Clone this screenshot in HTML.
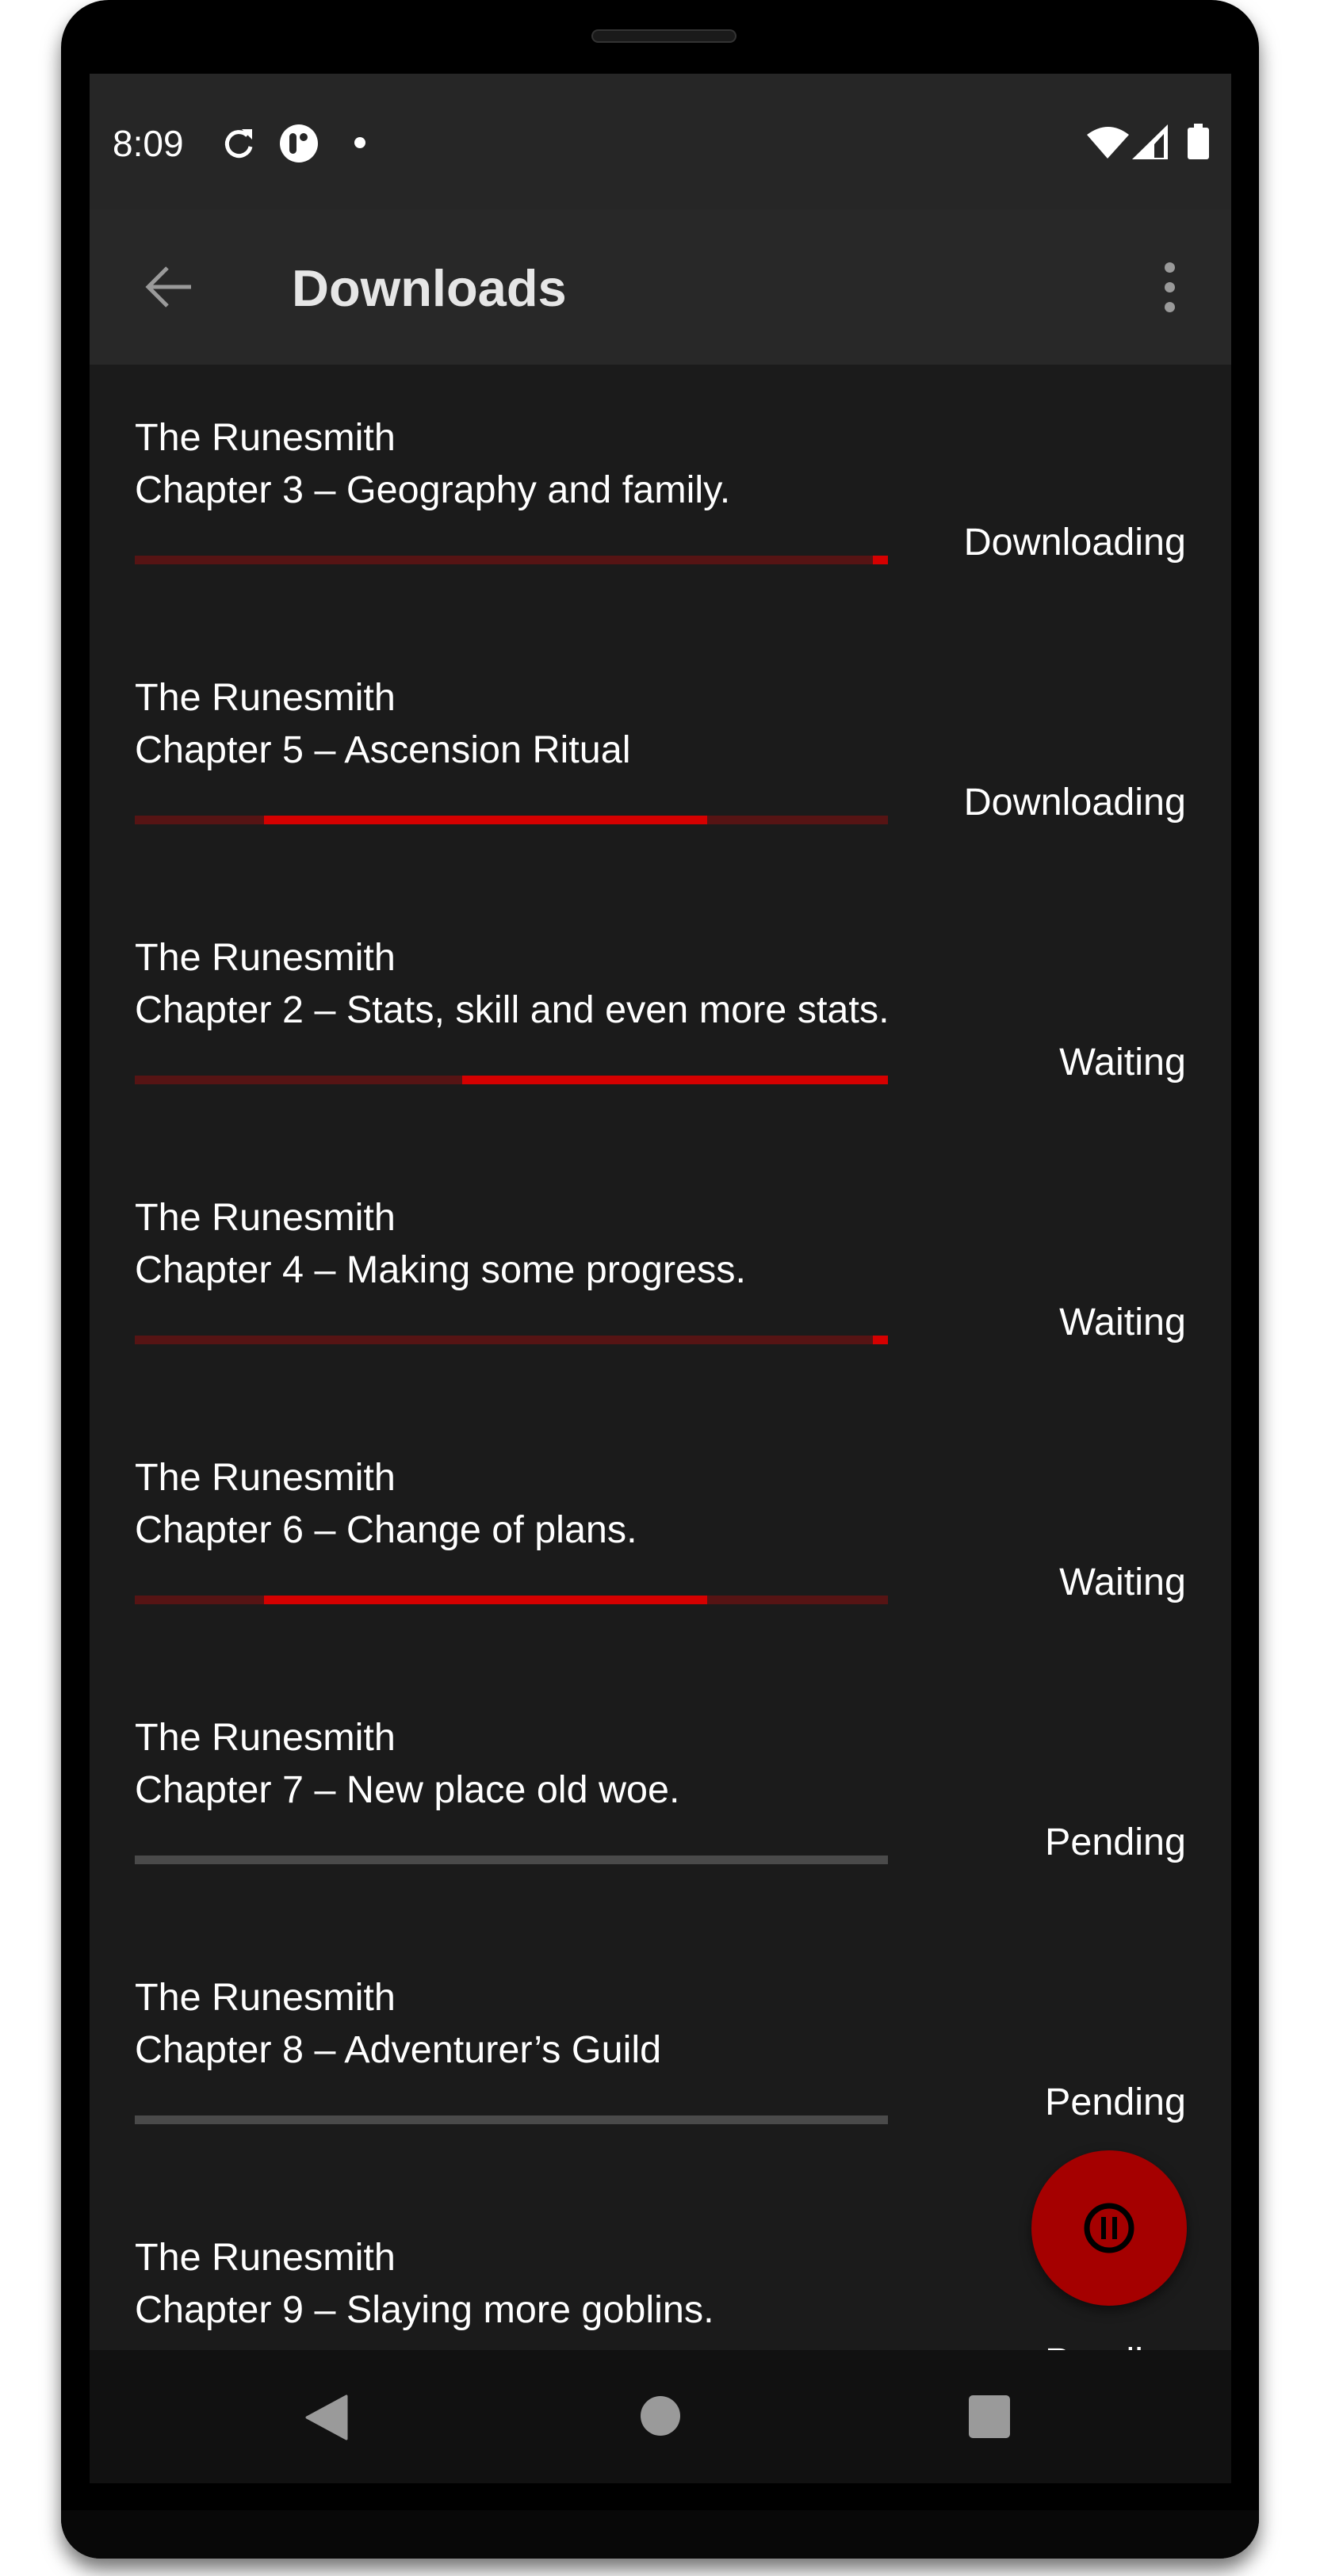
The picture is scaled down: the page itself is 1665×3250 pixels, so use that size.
<!DOCTYPE html>
<html><head><meta charset="utf-8"><style>
*{margin:0;padding:0;box-sizing:border-box}
body{width:1665px;height:3250px;background:#fff;position:relative;overflow:hidden;font-family:"Liberation Sans",sans-serif}
.phone{position:absolute;left:77px;top:0;width:1511px;height:3228px;background:#000;border-radius:60px 60px 50px 50px;box-shadow:0 14px 24px rgba(0,0,0,.55)}
.chin{position:absolute;left:77px;top:3167px;width:1511px;height:61px;background:#080808;border-radius:0 0 50px 50px}
.speaker{position:absolute;left:746px;top:37px;width:183px;height:17px;border-radius:9px;background:#1a1a1a;border:2px solid #333}
.screen{position:absolute;left:113px;top:93px;width:1440px;height:3040px;background:#1b1b1b;overflow:hidden}
.status{position:absolute;left:0;top:0;width:1440px;height:171px;background:#262626}
.appbar{position:absolute;left:0;top:171px;width:1440px;height:196px;background:#282828}
.t{position:absolute;color:#fff;font-size:48.5px;line-height:60px;white-space:nowrap}
.st{position:absolute;right:57px;color:#fff;font-size:48.5px;line-height:60px}
.bar{position:absolute;left:57px;width:950px;height:11px;background:#561414}
.bar i{position:absolute;top:0;height:11px;background:#d50000}
.grey{background:#4a4a4a}
.nav{position:absolute;left:0;top:2872px;width:1440px;height:168px;background:#111}
</style></head><body>
<div class="phone"></div>
<div class="chin"></div>
<div class="speaker"></div>
<div class="screen">
 <div class="status">
  <div style="position:absolute;left:29px;top:58px;color:#fff;font-size:46px;line-height:60px">8:09</div>
  <svg style="position:absolute;left:165px;top:64px" width="50" height="50" viewBox="0 0 50 50"><path d="M34 14 A15 15 0 1 0 38 28" fill="none" stroke="#fff" stroke-width="5"/><path d="M27 6 L40 6 L40 19 Z" fill="#fff"/></svg>
  <svg style="position:absolute;left:239px;top:63px" width="50" height="50" viewBox="0 0 50 50"><circle cx="25" cy="25" r="24" fill="#fff"/><rect x="13" y="12" width="9" height="26" rx="4.5" fill="#262626"/><circle cx="31" cy="17" r="5" fill="#262626"/></svg>
  <div style="position:absolute;left:334px;top:80px;width:14px;height:14px;border-radius:50%;background:#fff"></div>
  <svg style="position:absolute;left:1258px;top:63px" width="160" height="48" viewBox="0 0 160 48"><path d="M0 14 Q27 -6 53 14 L26 44 Z" fill="#fff"/><path d="M57 45 L102 1 L102 45 Z" fill="#fff"/><path d="M85 43 L85 26 L97 13 L97 43 Z" fill="#262626"/><rect x="127" y="5" width="27" height="40" rx="3" fill="#fff"/><rect x="135" y="0" width="11" height="6" fill="#fff"/></svg>
 </div>
 <div class="appbar">
  <svg style="position:absolute;left:68px;top:70px" width="64" height="56" viewBox="0 0 64 56"><path d="M60 28 H8 M30 4 L6 28 L30 52" fill="none" stroke="#9a9a9a" stroke-width="5"/></svg>
  <div style="position:absolute;left:255px;top:62px;color:#e6e6e6;font-size:65px;line-height:76px;font-weight:bold">Downloads</div>
  <div style="position:absolute;left:1356px;top:67px;width:13px;height:13px;border-radius:50%;background:#9a9a9a"></div>
  <div style="position:absolute;left:1356px;top:92px;width:13px;height:13px;border-radius:50%;background:#9a9a9a"></div>
  <div style="position:absolute;left:1356px;top:117px;width:13px;height:13px;border-radius:50%;background:#9a9a9a"></div>
 </div>

 <div class="t" style="left:57px;top:429px">The Runesmith</div>
 <div class="t" style="left:57px;top:495px">Chapter 3 – Geography and family.</div>
 <div class="st" style="top:561px">Downloading</div>
 <div class="bar" style="top:608px"><i style="left:931px;width:19px"></i></div>

 <div class="t" style="left:57px;top:757px">The Runesmith</div>
 <div class="t" style="left:57px;top:823px">Chapter 5 – Ascension Ritual</div>
 <div class="st" style="top:889px">Downloading</div>
 <div class="bar" style="top:936px"><i style="left:163px;width:559px"></i></div>

 <div class="t" style="left:57px;top:1085px">The Runesmith</div>
 <div class="t" style="left:57px;top:1151px">Chapter 2 – Stats, skill and even more stats.</div>
 <div class="st" style="top:1217px">Waiting</div>
 <div class="bar" style="top:1264px"><i style="left:413px;width:537px"></i></div>

 <div class="t" style="left:57px;top:1413px">The Runesmith</div>
 <div class="t" style="left:57px;top:1479px">Chapter 4 – Making some progress.</div>
 <div class="st" style="top:1545px">Waiting</div>
 <div class="bar" style="top:1592px"><i style="left:931px;width:19px"></i></div>

 <div class="t" style="left:57px;top:1741px">The Runesmith</div>
 <div class="t" style="left:57px;top:1807px">Chapter 6 – Change of plans.</div>
 <div class="st" style="top:1873px">Waiting</div>
 <div class="bar" style="top:1920px"><i style="left:163px;width:559px"></i></div>

 <div class="t" style="left:57px;top:2069px">The Runesmith</div>
 <div class="t" style="left:57px;top:2135px">Chapter 7 – New place old woe.</div>
 <div class="st" style="top:2201px">Pending</div>
 <div class="bar grey" style="top:2248px"></div>

 <div class="t" style="left:57px;top:2397px">The Runesmith</div>
 <div class="t" style="left:57px;top:2463px">Chapter 8 – Adventurer’s Guild</div>
 <div class="st" style="top:2529px">Pending</div>
 <div class="bar grey" style="top:2576px"></div>

 <div class="t" style="left:57px;top:2725px">The Runesmith</div>
 <div class="t" style="left:57px;top:2791px">Chapter 9 – Slaying more goblins.</div>
 <div class="st" style="top:2857px">Pending</div>

 <div style="position:absolute;left:1188px;top:2620px;width:196px;height:196px;border-radius:50%;background:#a50000;box-shadow:0 6px 14px rgba(0,0,0,.5)">
  <svg style="position:absolute;left:63px;top:63px" width="70" height="70" viewBox="0 0 70 70"><circle cx="35" cy="35" r="28" fill="none" stroke="#000" stroke-width="7"/><rect x="25" y="21" width="6" height="28" fill="#000"/><rect x="39" y="21" width="6" height="28" fill="#000"/></svg>
 </div>

 <div class="nav">
  <svg style="position:absolute;left:270px;top:56px" width="60" height="58" viewBox="0 0 60 58"><path d="M54 2 L54 56 L4 29 Z" fill="#9a9a9a" stroke="#9a9a9a" stroke-width="3" stroke-linejoin="round"/></svg>
  <div style="position:absolute;left:695px;top:58px;width:50px;height:50px;border-radius:50%;background:#9a9a9a"></div>
  <div style="position:absolute;left:1109px;top:57px;width:52px;height:54px;border-radius:5px;background:#9a9a9a"></div>
 </div>
</div>
</body></html>
